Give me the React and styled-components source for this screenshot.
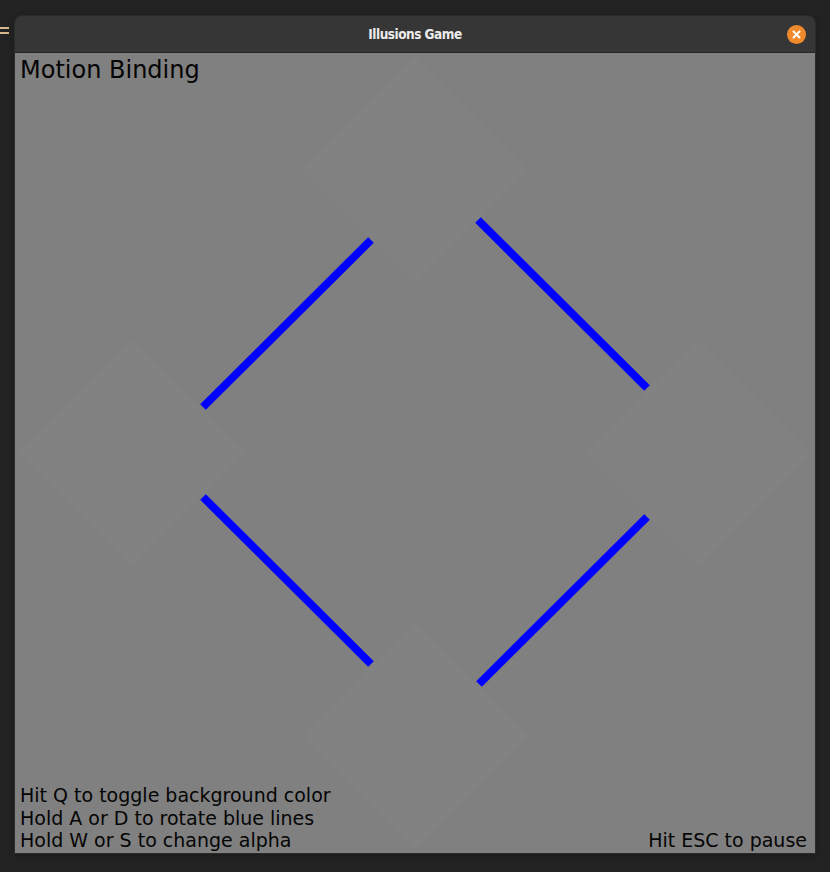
import React from "react";
import styled, { createGlobalStyle } from "styled-components";

const Global = createGlobalStyle`
  html, body { margin: 0; padding: 0; background: #232323; }
  body { font-family: "DejaVu Sans", sans-serif; }
`;

const Desktop = styled.div`
  display: flex;
  align-items: flex-start;
  width: 830px;
  height: 872px;
  padding-top: 16px;
  box-sizing: border-box;
  background: #232323;
`;

const Gutter = styled.div`
  width: 15px;
  display: flex;
  flex-direction: column;
  gap: 3px;
  padding-top: 11px;
`;

const Bar = styled.div`
  width: 9px;
  height: 2px;
  background: #d8b98f;
`;

const Window = styled.div`
  width: 800px;
  display: flex;
  flex-direction: column;
  border-radius: 7px 7px 0 0;
  overflow: hidden;
  box-shadow: 0 0 0 1px #2b2b2b, 0 2px 10px rgba(0,0,0,0.35);
`;

const TitleBar = styled.div`
  height: 36px;
  display: grid;
  grid-template-columns: 1fr auto 1fr;
  align-items: center;
  background: #363636;
  border-bottom: 1px solid #262626;
  padding: 0 9px;
`;

const Title = styled.div`
  grid-column: 2;
  font-family: "DejaVu Sans Condensed", "DejaVu Sans", sans-serif;
  font-weight: bold;
  font-size: 13.5px;
  color: #ececec;
  letter-spacing: -0.5px;
  transform: scaleY(1.08);
`;

const CloseButton = styled.div`
  grid-column: 3;
  justify-self: end;
  width: 19px;
  height: 19px;
  border-radius: 50%;
  background: #f08b2d;
  display: flex;
  align-items: center;
  justify-content: center;
`;

const Canvas = styled.div`
  position: relative;
  width: 800px;
  height: 800px;
  background: #808080;
  display: flex;
  flex-direction: column;
  justify-content: space-between;
  padding: 1px 8px 0 5px;
  box-sizing: border-box;
  color: #050505;
`;

const Drawing = styled.svg`
  position: absolute;
  inset: 0;
  width: 800px;
  height: 800px;
`;

const Heading = styled.div`
  position: relative;
  font-size: 24px;
  line-height: 32px;
`;

const Footer = styled.div`
  position: relative;
  display: flex;
  justify-content: space-between;
  align-items: flex-end;
  font-size: 19px;
  line-height: 22.7px;
  padding-bottom: 1px;
`;

const HelpLines = styled.div`
  display: flex;
  flex-direction: column;
`;

const diamonds = [
  [400, 117],
  [117, 400],
  [683, 400],
  [400, 683],
];

const lines = [
  [188, 354, 356, 187],
  [463, 167, 632, 335],
  [188, 444, 356, 611],
  [464, 631, 632, 464],
];

export default function App() {
  const h = 113;
  return (
    <>
      <Global />
      <Desktop>
        <Gutter>
          <Bar />
          <Bar />
        </Gutter>
        <Window>
          <TitleBar>
            <Title>Illusions Game</Title>
            <CloseButton>
              <svg width="9" height="9" viewBox="0 0 9 9">
                <path d="M1.5 1.5 L7.5 7.5 M7.5 1.5 L1.5 7.5" stroke="#fff" strokeWidth="2" strokeLinecap="round" />
              </svg>
            </CloseButton>
          </TitleBar>
          <Canvas>
            <Drawing viewBox="0 0 800 800">
              {diamonds.map(([cx, cy], i) => (
                <polygon
                  key={i}
                  points={`${cx},${cy - h} ${cx + h},${cy} ${cx},${cy + h} ${cx - h},${cy}`}
                  fill="#828282"
                />
              ))}
              {lines.map(([x1, y1, x2, y2], i) => (
                <line key={i} x1={x1} y1={y1} x2={x2} y2={y2} stroke="#0000ff" strokeWidth="8" strokeLinecap="butt" />
              ))}
            </Drawing>
            <Heading>Motion Binding</Heading>
            <Footer>
              <HelpLines>
                <span>Hit Q to toggle background color</span>
                <span>Hold A or D to rotate blue lines</span>
                <span>Hold W or S to change alpha</span>
              </HelpLines>
              <span>Hit ESC to pause</span>
            </Footer>
          </Canvas>
        </Window>
      </Desktop>
    </>
  );
}
